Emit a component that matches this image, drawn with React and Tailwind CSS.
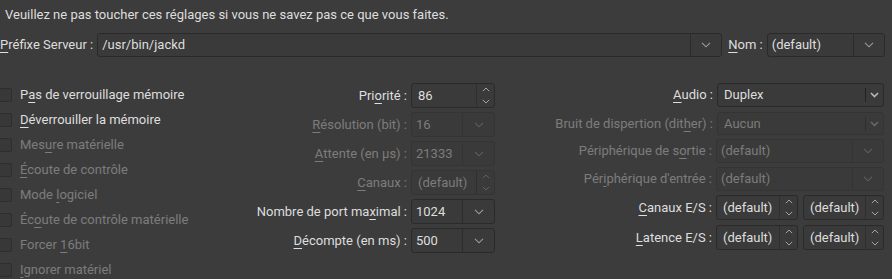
import React from 'react'

const enabled = 'text-[#dedede]'
const disabled = 'text-[#7c7c7c]'

function Chevron({ dim }) {
  return (
    <svg width="10" height="6" viewBox="0 0 10 6" className="block">
      <polyline points="1,0.8 5,4.8 9,0.8" fill="none" stroke={dim ? '#5f5f5f' : '#9c9c9c'} strokeWidth="1.1" />
    </svg>
  )
}

function SpinArrows({ dim }) {
  const c = dim ? '#5f5f5f' : '#a4a4a4'
  return (
    <div className="flex w-[18px] flex-col items-center justify-center gap-[7px] border-l border-[#2f2f2f]">
      <svg width="8" height="5" viewBox="0 0 8 5" className="block">
        <polyline points="0.8,4.2 4,1 7.2,4.2" fill="none" stroke={c} strokeWidth="1" />
      </svg>
      <svg width="8" height="5" viewBox="0 0 8 5" className="block">
        <polyline points="0.8,0.8 4,4 7.2,0.8" fill="none" stroke={c} strokeWidth="1" />
      </svg>
    </div>
  )
}

function Combo({ value, w, btn = 31, dim, h = 'h-[24px]' }) {
  return (
    <div className={`flex ${w} ${h} shrink-0 rounded-[3px] border ${dim ? 'border-[#343434]' : 'border-[#2a2a2a]'} bg-[#3a3a3a]`}>
      <span className={`flex flex-1 items-center overflow-hidden whitespace-nowrap pl-[4px] ${dim ? disabled : enabled}`}>{value}</span>
      <div style={{ width: btn }} className={`flex items-center justify-center border-l ${dim ? 'border-[#343434]' : 'border-[#2c2c2c]'}`}>
        <Chevron dim={dim} />
      </div>
    </div>
  )
}

function Select({ value, dim }) {
  return (
    <div className={`flex h-full w-[167px] shrink-0 items-center rounded-[3px] border ${dim ? 'border-[#343434]' : 'border-[#2a2a2a]'} bg-[#3a3a3a]`}>
      <span className={`flex-1 pl-[6px] ${dim ? disabled : enabled}`}>{value}</span>
      <span className={`h-[14px] w-px ${dim ? 'bg-[#2e2e2e]' : 'bg-[#222222]'}`} />
      <div className="flex w-[17px] items-center justify-center">
        <svg width="9" height="6" viewBox="0 0 9 6" className="block">
          <polyline points="1,1 4.5,4.6 8,1" fill="none" stroke={dim ? '#666666' : '#b8b8b8'} strokeWidth="1.6" />
        </svg>
      </div>
    </div>
  )
}

function Spin({ value, w, dim }) {
  return (
    <div className={`flex h-full ${w} shrink-0 rounded-[3px] border ${dim ? 'border-[#343434]' : 'border-[#2a2a2a]'} bg-[#3a3a3a]`}>
      <span className={`flex flex-1 items-center whitespace-nowrap pl-[6px] ${dim ? disabled : enabled}`}>{value}</span>
      <SpinArrows dim={dim} />
    </div>
  )
}

function U({ children }) {
  return <span className="underline decoration-1 underline-offset-[3px]">{children}</span>
}

function Check({ children, dim }) {
  return (
    <div className="flex h-[25px] items-center">
      <span className="-ml-[2px] h-[14px] w-[14px] rounded-[2px] border border-[#2e2e2e] bg-[#383838]" />
      <span className={`ml-[8px] whitespace-nowrap ${dim ? disabled : enabled}`}>{children}</span>
    </div>
  )
}

function Row({ label, dim, children, h = 'h-[25px]', mt = '' }) {
  return (
    <div className={`flex ${h} ${mt} items-stretch justify-end`}>
      <span className={`mr-[4px] flex items-center whitespace-nowrap ${dim ? disabled : enabled}`}>{label}</span>
      {children}
    </div>
  )
}

export default function App() {
  return (
    <div className="h-[279px] w-[892px] overflow-hidden bg-[#3c3c3c] font-['Roboto',sans-serif] text-[13px] text-[#dedede]">
      <p className="pl-[5px] pt-[6px] leading-[18px]">Veuillez ne pas toucher ces réglages si vous ne savez pas ce que vous faites.</p>

      <div className="mt-[9px] flex h-[24px] items-stretch">
        <span className="flex items-center whitespace-nowrap">
          <U>P</U>réfixe Serveur :
        </span>
        <div className="ml-[4px]">
          <Combo value="/usr/bin/jackd" w="w-[625px]" />
        </div>
        <span className="ml-[6px] flex items-center whitespace-nowrap">
          <U>N</U>om :
        </span>
        <div className="ml-[4px]">
          <Combo value="(default)" w="w-[118px]" />
        </div>
      </div>

      <div className="mt-[25px] flex">
        <div className="w-[230px]">
          <Check><>P<U>a</U>s de verrouillage mémoire</></Check>
          <Check><><U>D</U>éverrouiller la mémoire</></Check>
          <Check dim><>Mes<U>u</U>re matérielle</></Check>
          <Check dim><><U>É</U>coute de contrôle</></Check>
          <Check dim><>Mode <U>l</U>ogiciel</></Check>
          <Check dim><>Éc<U>o</U>ute de contrôle matérielle</></Check>
          <Check dim><>Forcer <U>1</U>6bit</></Check>
          <Check dim><><U>I</U>gnorer matériel</></Check>
        </div>

        <div className="flex w-[265px] flex-col gap-[4px] pt-[1px]">
          <Row label={<>Pri<U>o</U>rité :</>}>
            <Spin value="86" w="w-[84px]" />
          </Row>
          <Row label={<><U>R</U>ésolution (bit) :</>} dim>
            <Combo value="16" w="w-[84px]" btn={32} dim h="h-full" />
          </Row>
          <Row label={<><U>A</U>ttente (en µs) :</>} dim>
            <Combo value="21333" w="w-[84px]" btn={32} dim h="h-full" />
          </Row>
          <Row label={<><U>C</U>anaux :</>} dim>
            <Spin value="(default)" w="w-[84px]" dim />
          </Row>
          <Row label={<>Nombre de port ma<U>x</U>imal :</>}>
            <Combo value="1024" w="w-[84px]" btn={32} h="h-full" />
          </Row>
          <Row label={<><U>D</U>écompte (en ms) :</>}>
            <Combo value="500" w="w-[84px]" btn={32} h="h-full" />
          </Row>
        </div>

        <div className="flex w-[389px] flex-col pt-[1px]">
          <Row label={<><U>A</U>udio :</>} h="h-[24px]">
            <Select value="Duplex" />
          </Row>
          <Row label={<>Bruit de dispertion (dit<U>h</U>er) :</>} h="h-[23px]" mt="mt-[5px]" dim>
            <Select value="Aucun" dim />
          </Row>
          <Row label={<>Périphérique de s<U>o</U>rtie :</>} h="h-[24px]" mt="mt-[4px]" dim>
            <Combo value="(default)" w="w-[168px]" dim h="h-full" />
          </Row>
          <Row label={<>Pér<U>i</U>phérique d'entrée :</>} h="h-[24px]" mt="mt-[4px]" dim>
            <Combo value="(default)" w="w-[168px]" dim h="h-full" />
          </Row>
          <Row label={<><U>C</U>anaux E/S :</>} mt="mt-[4px]">
            <div className="flex gap-[5px]">
              <Spin value="(default)" w="w-[82px]" />
              <Spin value="(default)" w="w-[81px]" />
            </div>
          </Row>
          <Row label={<><U>L</U>atence E/S :</>} mt="mt-[5px]">
            <div className="flex gap-[5px]">
              <Spin value="(default)" w="w-[82px]" />
              <Spin value="(default)" w="w-[81px]" />
            </div>
          </Row>
        </div>
      </div>
    </div>
  )
}
